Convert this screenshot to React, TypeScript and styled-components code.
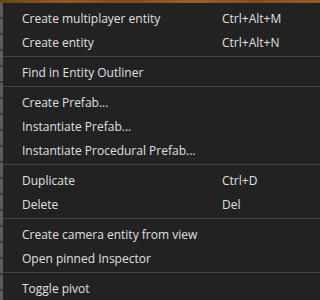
import React from 'react'
import styled, { createGlobalStyle } from 'styled-components'

const Global = createGlobalStyle`
  html, body {
    margin: 0;
    padding: 0;
    background: #222222;
  }
  #root {
    width: 320px;
    height: 300px;
    overflow: hidden;
  }
`

type Item = { label: string; shortcut?: string }

const sections: Item[][] = [
  [
    { label: 'Create multiplayer entity', shortcut: 'Ctrl+Alt+M' },
    { label: 'Create entity', shortcut: 'Ctrl+Alt+N' },
  ],
  [{ label: 'Find in Entity Outliner' }],
  [
    { label: 'Create Prefab...' },
    { label: 'Instantiate Prefab...' },
    { label: 'Instantiate Procedural Prefab...' },
  ],
  [
    { label: 'Duplicate', shortcut: 'Ctrl+D' },
    { label: 'Delete', shortcut: 'Del' },
  ],
  [
    { label: 'Create camera entity from view' },
    { label: 'Open pinned Inspector' },
  ],
  [{ label: 'Toggle pivot' }],
]

function App() {
  return (
    <Page>
      <Global />
      <Scene />
      <Body>
        <Gutter />
        <Menu>
          {sections.map((items, i) => (
            <React.Fragment key={i}>
              {i > 0 ? <Separator /> : null}
              {items.map((it) => (
                <Row key={it.label}>
                  <Label>{it.label}</Label>
                  {it.shortcut ? <Shortcut>{it.shortcut}</Shortcut> : null}
                </Row>
              ))}
            </React.Fragment>
          ))}
        </Menu>
      </Body>
    </Page>
  )
}

export default App

const Page = styled.div`
  width: 320px;
  height: 300px;
  display: flex;
  flex-direction: column;
  font-family: 'Open Sans', 'Noto Sans', sans-serif;
  font-size: 12px;
`

const Scene = styled.div`
  height: 3px;
  flex: none;
  background: linear-gradient(90deg, #6b4420 0%, #8a5a2a 20%, #7a4c22 40%, #94622e 60%, #7d5026 80%, #8f5e2c 100%);
`

const Body = styled.div`
  flex: 1;
  display: flex;
  min-height: 0;
`

const Gutter = styled.div`
  width: 3px;
  flex: none;
  background: repeating-linear-gradient(180deg, #5c5c5c 0px, #5c5c5c 14px, #3a3a3a 14px, #3a3a3a 16px);
`

const Menu = styled.div`
  flex: 1;
  background: #222222;
  padding-top: 3px;
  display: flex;
  flex-direction: column;
`

const Row = styled.div`
  height: 24px;
  display: flex;
  align-items: center;
  padding-left: 19px;
  color: #e0e0e0;
  white-space: nowrap;
`

const Label = styled.span`
  width: 200px;
`

const Shortcut = styled.span`
  color: #e0e0e0;
`

const Separator = styled.div`
  height: 1px;
  background: #454545;
  margin: 2px 0 3px 0;
`
